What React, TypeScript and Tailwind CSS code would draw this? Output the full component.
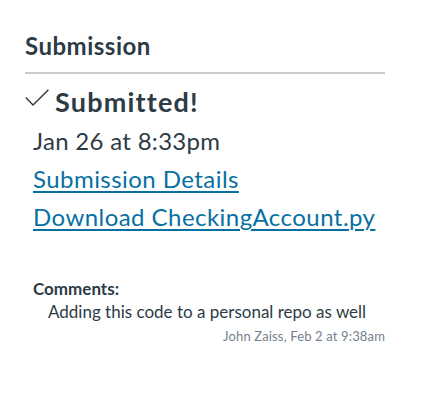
import React from "react";

export default function App() {
  return (
    <div className="min-h-[414px] w-[427px] bg-white font-['Lato','Noto_Sans',sans-serif] text-[#2d3b45]">
      <div className="ml-[25px] w-[360px] pt-[32px]">
        <h2 className="border-b-2 border-[#c7cdd1] pb-[12px] text-[24px] font-bold leading-[28px] tracking-[0.5px]">
          Submission
        </h2>
        <div className="mt-[12px] flex items-center gap-[6px]">
          <svg width="24" height="18" viewBox="0 0 24 18" fill="none" className="mb-[8px] shrink-0">
            <path d="M0.8 8.5 L8 16 L23.4 0.8" stroke="#2d3b45" strokeWidth="1.4" />
          </svg>
          <span className="text-[27px] font-bold leading-[32px] tracking-[1.2px]">Submitted!</span>
        </div>
        <div className="pl-[8px]">
          <div className="mt-[4px] text-[24px] leading-[38px] tracking-[0.3px]">Jan 26 at 8:33pm</div>
          <a href="#" className="block text-[24px] leading-[38px] tracking-[0.45px] text-[#0770a3] underline decoration-[1.5px] underline-offset-[3px]">
            Submission Details
          </a>
          <a href="#" className="block text-[24px] leading-[38px] tracking-[0.45px] text-[#0770a3] underline decoration-[1.5px] underline-offset-[3px]">
            Download CheckingAccount.py
          </a>
          <div className="mt-[42px] text-[17px] font-bold leading-[22px]">Comments:</div>
          <div className="pl-[15px] text-[17px] leading-[24px]">Adding this code to a personal repo as well</div>
          <div className="mt-[4px] text-right text-[13px] leading-[16px] tracking-[0.15px] text-[#73818c]">
            John Zaiss, Feb 2 at 9:38am
          </div>
        </div>
      </div>
    </div>
  );
}
